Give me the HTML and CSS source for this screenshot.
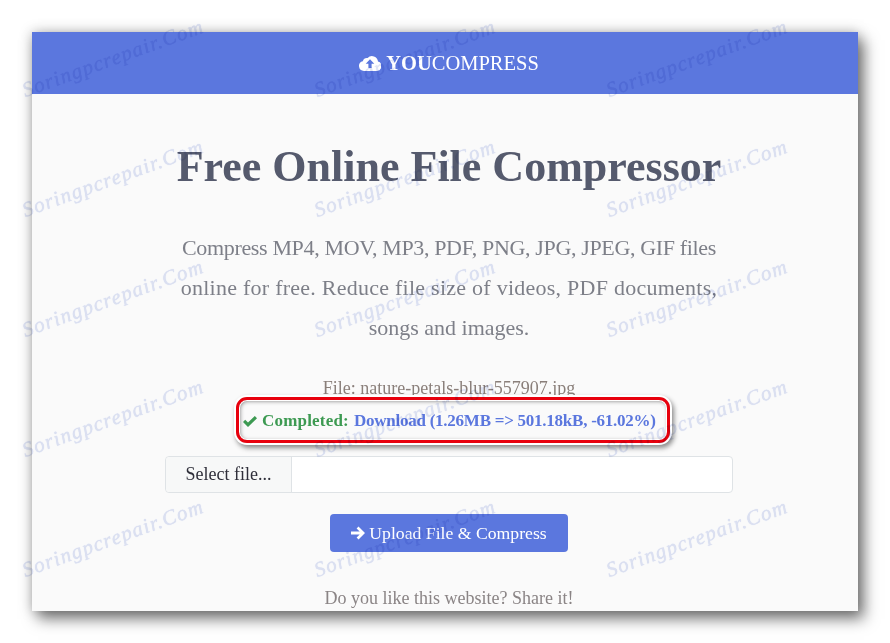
FILE: index.html
```html
<!DOCTYPE html>
<html lang="en">
<head>
<meta charset="UTF-8">
<meta name="viewport" content="width=device-width, initial-scale=1.0">
<title>YouCompress</title>
<link rel="stylesheet" href="styles.css">
</head>
<body>
    <div class="window">
        <div class="navbar">
            <svg class="cloud-icon" viewBox="0 0 22 16">
                <path fill="#fff" d="M5 16a5 5 0 0 1-1.200-9.850A4.500 4.500 0 0 1 8.600 3 6 6 0 0 1 19 6.600 4.800 4.800 0 0 1 17.500 16z"/>
                <path fill="#5b77de" d="M11 4.300l4.300 4.500h-2.700V13h-3.200V8.800H6.700z"/>
            </svg>
            <span class="brand"><b>YOU</b>COMPRESS</span>
        </div>

        <div class="container">
            <h1>Free Online File Compressor</h1>
            <p class="lead">
                <span class="lead-first">Compress MP4, MOV, MP3, PDF, PNG, JPG, JPEG, GIF files</span>
                <span class="lead-second">online for free. Reduce file size of videos, PDF documents,</span>
                <span>songs and images.</span>
            </p>
            <div class="file-name">File: nature-petals-blur-557907.jpg</div>
            <div class="status">
                <svg class="check-icon" viewBox="0 0 14 11">
                    <path fill="#3d9a52" d="M5 11 0 6l2.200-2.200L5 6.600 11.800 0 14 2.200z"/>
                </svg>
                <span class="done">Completed:</span>
                <a href="#">Download (1.26MB =&gt; 501.18kB, -61.02%)</a>
            </div>
            <div class="file-input">
                <span class="file-btn">Select file...</span>
                <span class="file-field"></span>
            </div>
            <button class="upload-btn">
                <svg class="arrow-icon" viewBox="0 0 14 14">
                    <path fill="#fff" d="M7.500 0.500 14 7l-6.500 6.500-1.900-1.900 3.100-3.100H0v-3h8.700L5.600 2.400z"/>
                </svg>
                Upload File &amp; Compress
            </button>
            <div class="share">Do you like this website? Share it!</div>
        </div>

        <div class="watermarks">
            <span>Soringpcrepair.Com</span><span>Soringpcrepair.Com</span><span>Soringpcrepair.Com</span>
            <span>Soringpcrepair.Com</span><span>Soringpcrepair.Com</span><span>Soringpcrepair.Com</span>
            <span>Soringpcrepair.Com</span><span>Soringpcrepair.Com</span><span>Soringpcrepair.Com</span>
            <span>Soringpcrepair.Com</span><span>Soringpcrepair.Com</span><span>Soringpcrepair.Com</span>
            <span>Soringpcrepair.Com</span><span>Soringpcrepair.Com</span><span>Soringpcrepair.Com</span>
        </div>
    </div>
</body>
</html>
```

FILE: styles.css
```css
body {
    margin: 0;
    background-color: #fff;
    font-family: "Liberation Serif", serif;
    overflow: hidden;
}

.window {
    position: relative;
    width: 826px;
    height: 579px;
    margin: 32px;
    background-color: #fafafa;
    box-shadow: 6px 8px 14px rgba(0, 0, 0, 0.5), 0 0 12px rgba(0, 0, 0, 0.25);
}

.navbar {
    display: flex;
    justify-content: center;
    align-items: center;
    gap: 5px;
    height: 62px;
    padding-left: 8px;
    background-color: #5b77de;
    color: #fff;
}

.cloud-icon {
    width: 22px;
    height: 16px;
}

.brand {
    font-size: 20.5px;
}

.container {
    display: flex;
    flex-direction: column;
    align-items: center;
    height: 517px;
    padding-left: 8px;
    overflow: hidden;
}

h1 {
    margin: 46px 0 0;
    font-size: 44px;
    line-height: 54px;
    color: #555a6d;
}

.lead {
    margin: 34px 0 0;
    font-size: 22px;
    line-height: 40px;
    text-align: center;
    color: #7d7f88;
}

.lead span {
    display: block;
}

.lead .lead-first {
    letter-spacing: -0.35px;
}

.lead .lead-second {
    letter-spacing: 0.25px;
}

.file-name {
    margin-top: 30px;
    font-size: 18px;
    line-height: 20px;
    color: #8a7f7a;
}

.status {
    display: flex;
    align-items: center;
    gap: 5px;
    box-sizing: border-box;
    width: 434px;
    height: 46px;
    margin: -1px 0 0 8px;
    padding: 2px 10px 0 4px;
    border: 3px solid #e8000d;
    border-radius: 11px;
    font-size: 17px;
    font-weight: bold;
    box-shadow: 0 0 0 2px #fff, 2px 3px 5px 2px rgba(0, 0, 0, 0.45), inset 0 0 0 1px #fff, inset 1px 1px 4px rgba(0, 0, 0, 0.5);
}

.check-icon {
    width: 14px;
    height: 11px;
}

.done {
    color: #3d9a52;
    letter-spacing: 0.2px;
}

.status a {
    color: #5b77de;
    text-decoration: none;
    letter-spacing: -0.25px;
}

.file-input {
    display: flex;
    width: 568px;
    height: 37px;
    margin-top: 13px;
    border: 1px solid #dfe3e6;
    border-radius: 4px;
    box-sizing: border-box;
    background-color: #fff;
    font-size: 18px;
}

.file-btn {
    display: flex;
    align-items: center;
    justify-content: center;
    width: 125px;
    border-right: 1px solid #dfe3e6;
    border-radius: 4px 0 0 4px;
    background-color: #f7f8f8;
    color: #2f2f3a;
}

.file-field {
    flex: 1;
}

.upload-btn {
    display: flex;
    align-items: center;
    justify-content: center;
    gap: 4px;
    width: 238px;
    height: 38px;
    margin-top: 21px;
    border: none;
    border-radius: 4px;
    background-color: #5b77de;
    color: #fff;
    font-family: "Liberation Serif", serif;
    font-size: 17.7px;
}

.arrow-icon {
    width: 14px;
    height: 14px;
}

.share {
    margin-top: 36px;
    font-size: 18px;
    line-height: 20px;
    color: #8a8485;
}

/* watermark sits over everything */
.watermarks {
    position: absolute;
    inset: 0;
    display: grid;
    grid-template-columns: repeat(3, 292px);
    grid-auto-rows: 120px;
    margin-left: -65px;
    margin-top: -34px;
    pointer-events: none;
}

.watermarks span {
    display: flex;
    align-items: center;
    justify-content: center;
    font-style: italic;
    font-size: 21px;
    letter-spacing: 1.2px;
    color: #e0e5f6;
    text-shadow: 0 0 1px #d3daf2;
    mix-blend-mode: multiply;
    transform: rotate(-20deg);
    white-space: nowrap;
}
```
